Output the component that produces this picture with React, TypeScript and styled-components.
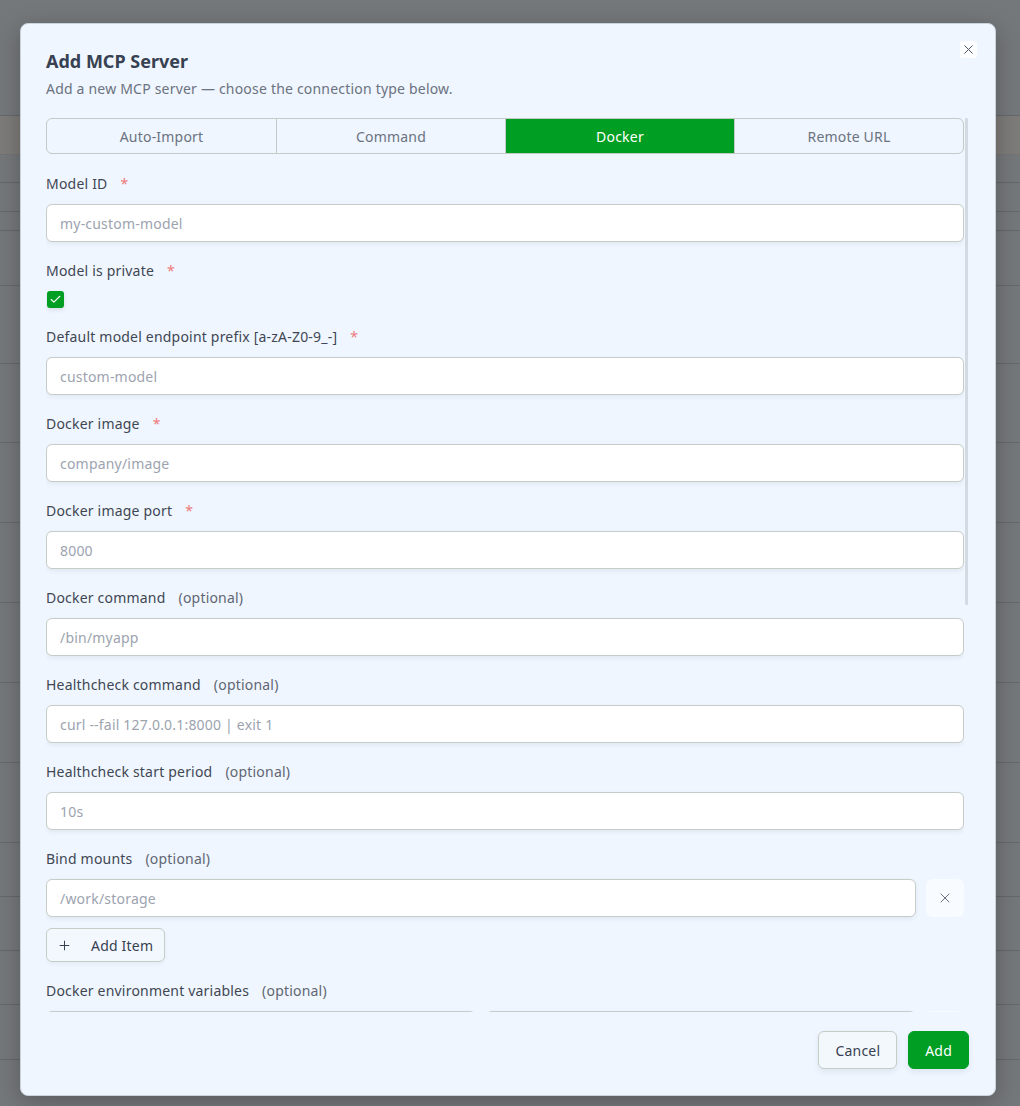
import React from "react";
import styled, { createGlobalStyle } from "styled-components";
import { X, Plus, Check } from "lucide-react";

const GlobalStyle = createGlobalStyle`
  html, body {
    margin: 0;
    padding: 0;
  }
  body {
    font-family: "Noto Sans", "Open Sans", sans-serif;
    background: #75787b;
    overflow: hidden;
  }
  * {
    box-sizing: border-box;
  }
`;

// lines of the table that sits behind the dimmed overlay
const bgLines = [116, 155, 183, 212, 231, 286, 364, 443, 523, 603, 683, 763, 843, 897, 951, 1005, 1060, 1106];

const Page = styled.div`
  position: relative;
  width: 1020px;
  height: 1106px;
  overflow: hidden;
`;

const Backdrop = styled.div`
  display: flex;
  flex-direction: column;
  background: #75787b;
`;

const BgRow = styled.div<{ $h: number; $band?: boolean; $last?: boolean }>`
  height: ${(p) => p.$h}px;
  background: ${(p) => (p.$band ? "#7e7c7a" : "transparent")};
  border-bottom: ${(p) => (p.$last ? "none" : p.$band ? "1px dotted #6a6c6e" : "1px solid #65686b")};
`;

const Dialog = styled.div`
  position: absolute;
  left: 20px;
  top: 23px;
  width: 976px;
  height: 1073px;
  background: #eff6ff;
  border: 1px solid #c9d3dc;
  border-radius: 8px;
  box-shadow: 0 6px 24px rgba(0, 0, 0, 0.25);
  padding: 24px 26px 26px 25px;
  display: flex;
  flex-direction: column;
  letter-spacing: 0.2px;
`;

const CloseButton = styled.button`
  position: absolute;
  top: 17px;
  right: 18px;
  width: 17px;
  height: 17px;
  padding: 0;
  border: none;
  border-radius: 2px;
  background: rgba(255, 255, 255, 0.85);
  color: #4b5563;
  display: flex;
  align-items: center;
  justify-content: center;
`;

const Title = styled.h2`
  margin: 0;
  font-size: 18px;
  line-height: 26px;
  font-weight: 700;
  color: #374151;
  letter-spacing: 0;
`;

const Subtitle = styled.p`
  margin: 5px 0 0;
  font-size: 14px;
  line-height: 20px;
  color: #6b7280;
`;

const ScrollArea = styled.div`
  flex: 1;
  min-height: 0;
  margin-top: 19px;
  display: flex;
`;

const ScrollContent = styled.div`
  flex: 1;
  min-width: 0;
  overflow: hidden;
  display: flex;
  flex-direction: column;
  gap: 19px;
`;

const ScrollTrack = styled.div`
  flex: none;
  width: 5px;
  padding: 0 1px;
`;

const ScrollThumb = styled.div<{ $size: number }>`
  height: ${(p) => p.$size}px;
  background: #d3dae1;
  border-radius: 1px;
`;

const Tabs = styled.div`
  flex: none;
  display: grid;
  grid-template-columns: repeat(4, 1fr);
  height: 36px;
  margin-bottom: 1px;
  border: 1px solid #c4cac4;
  border-radius: 6px;
  overflow: hidden;
`;

const Tab = styled.div<{ $active?: boolean }>`
  display: flex;
  align-items: center;
  justify-content: center;
  font-size: 14px;
  color: ${(p) => (p.$active ? "#ffffff" : "#6b7280")};
  background: ${(p) => (p.$active ? "#009e22" : "transparent")};
  & + & {
    border-left: 1px solid #c4cac4;
  }
`;

const Field = styled.div`
  flex: none;
  display: flex;
  flex-direction: column;
  gap: 10px;
`;

const Label = styled.label`
  font-size: 14px;
  line-height: 20px;
  color: #3f4753;
`;

const Required = styled.span`
  margin-left: 13px;
  color: #ee7a7a;
`;

const Optional = styled.span`
  margin-left: 13px;
  color: #5f6672;
`;

const Input = styled.input`
  flex: none;
  width: 100%;
  height: 38px;
  padding: 0 13px;
  border: 1px solid #c6ccc6;
  border-radius: 6px;
  background: #ffffff;
  box-shadow: 0 2px 5px rgba(30, 40, 60, 0.07);
  font-family: inherit;
  font-size: 14px;
  letter-spacing: 0.2px;
  color: #374151;
  outline: none;
  &::placeholder {
    color: #9ca3af;
  }
`;

const CheckBox = styled.span`
  width: 17px;
  height: 17px;
  margin-left: 1px;
  border-radius: 3px;
  background: #009e22;
  color: #ffffff;
  display: flex;
  align-items: center;
  justify-content: center;
  box-shadow: 0 2px 4px rgba(0, 0, 0, 0.1);
`;

const Row = styled.div`
  display: flex;
  gap: 10px;
  & > input {
    flex: 1;
    min-width: 0;
  }
`;

const RemoveButton = styled.button`
  flex: none;
  width: 38px;
  height: 38px;
  padding: 0;
  border: none;
  border-radius: 6px;
  background: rgba(255, 255, 255, 0.55);
  color: #6b7280;
  display: flex;
  align-items: center;
  justify-content: center;
`;

const AddItemButton = styled.button`
  align-self: flex-start;
  height: 34px;
  margin-top: 1px;
  padding: 0 11px 0 10px;
  border: 1px solid #c6ccc6;
  border-radius: 6px;
  background: rgba(255, 255, 255, 0.25);
  box-shadow: 0 2px 4px rgba(30, 40, 60, 0.05);
  font-family: inherit;
  font-size: 14px;
  letter-spacing: 0.2px;
  color: #374151;
  display: flex;
  align-items: center;
  gap: 19px;
`;

const Footer = styled.div`
  margin-top: 19px;
  display: flex;
  justify-content: flex-end;
  gap: 11px;
`;

const FooterButton = styled.button<{ $primary?: boolean }>`
  height: 38px;
  padding: 0 16px;
  border-radius: 6px;
  border: 1px solid ${(p) => (p.$primary ? "#009e22" : "#c6ccc6")};
  background: ${(p) => (p.$primary ? "#009e22" : "#f3f8fd")};
  color: ${(p) => (p.$primary ? "#ffffff" : "#374151")};
  font-family: inherit;
  font-size: 14px;
  letter-spacing: 0.2px;
  box-shadow: 0 3px 6px rgba(30, 40, 60, 0.08);
`;

type TextFieldProps = {
  label: string;
  placeholder?: string;
  required?: boolean;
};

const TextField: React.FC<TextFieldProps> = ({ label, placeholder, required }) => (
  <Field>
    <Label>
      {label}
      {required ? <Required>*</Required> : <Optional>(optional)</Optional>}
    </Label>
    <Input placeholder={placeholder} />
  </Field>
);

export default function App() {
  const tabs = ["Auto-Import", "Command", "Docker", "Remote URL"];

  return (
    <Page>
      <GlobalStyle />
      <Backdrop>
        {bgLines.map((y, i) => (
          <BgRow
            key={y}
            $h={y - (i === 0 ? 0 : bgLines[i - 1])}
            $band={i === 1}
            $last={i === bgLines.length - 1}
          />
        ))}
      </Backdrop>

      <Dialog>
        <CloseButton aria-label="Close">
          <X size={15} strokeWidth={1.6} />
        </CloseButton>
        <Title>Add MCP Server</Title>
        <Subtitle>Add a new MCP server — choose the connection type below.</Subtitle>

        <ScrollArea>
          <ScrollContent>
            <Tabs>
              {tabs.map((t) => (
                <Tab key={t} $active={t === "Docker"}>
                  {t}
                </Tab>
              ))}
            </Tabs>

            <TextField label="Model ID" placeholder="my-custom-model" required />

            <Field>
              <Label>
                Model is private
                <Required>*</Required>
              </Label>
              <CheckBox>
                <Check size={13} strokeWidth={2} />
              </CheckBox>
            </Field>

            <TextField label="Default model endpoint prefix [a-zA-Z0-9_-]" placeholder="custom-model" required />
            <TextField label="Docker image" placeholder="company/image" required />
            <TextField label="Docker image port" placeholder="8000" required />
            <TextField label="Docker command" placeholder="/bin/myapp" />
            <TextField label="Healthcheck command" placeholder="curl --fail 127.0.0.1:8000 | exit 1" />
            <TextField label="Healthcheck start period" placeholder="10s" />

            <Field>
              <Label>
                Bind mounts
                <Optional>(optional)</Optional>
              </Label>
              <Row>
                <Input placeholder="/work/storage" />
                <RemoveButton aria-label="Remove">
                  <X size={16} strokeWidth={1.5} />
                </RemoveButton>
              </Row>
              <AddItemButton>
                <Plus size={15} strokeWidth={1.6} />
                Add Item
              </AddItemButton>
            </Field>

            <Field>
              <Label>
                Docker environment variables
                <Optional>(optional)</Optional>
              </Label>
              <Row>
                <Input aria-label="Variable name" />
                <Input aria-label="Variable value" />
                <RemoveButton aria-label="Remove" />
              </Row>
            </Field>
          </ScrollContent>
          <ScrollTrack>
            <ScrollThumb $size={487} />
          </ScrollTrack>
        </ScrollArea>

        <Footer>
          <FooterButton>Cancel</FooterButton>
          <FooterButton $primary>Add</FooterButton>
        </Footer>
      </Dialog>
    </Page>
  );
}
